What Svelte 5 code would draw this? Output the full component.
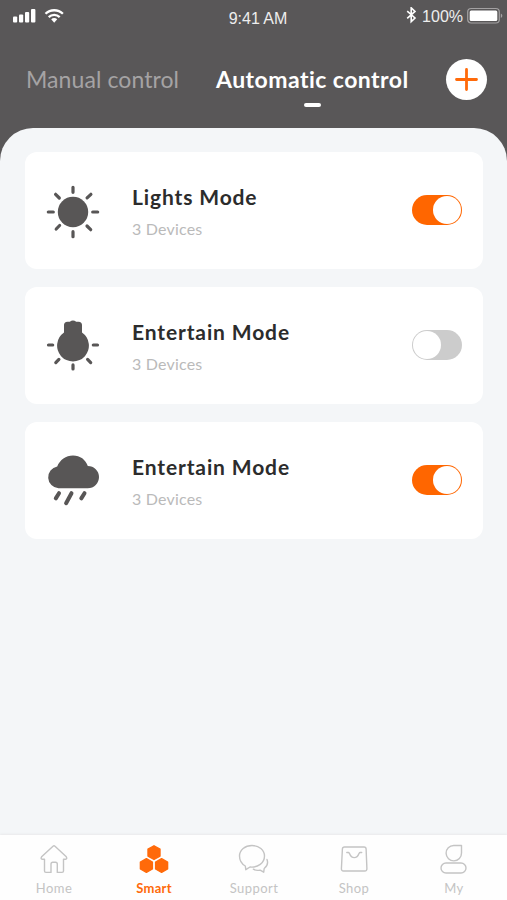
<script>
	let tab = 'auto';
	let active = 'Smart';

	let modes = [
		{ icon: 'sun', name: 'Lights Mode', devices: 3, on: true },
		{ icon: 'bulb', name: 'Entertain Mode', devices: 3, on: false },
		{ icon: 'rain', name: 'Entertain Mode', devices: 3, on: true }
	];

	const navItems = ['Home', 'Smart', 'Support', 'Shop', 'My'];

	const toggle = (index) => {
		modes[index].on = !modes[index].on;
	};
</script>

<div class="screen">
	<header>
		<div class="status">
			<div class="signal">
				<svg width="54" height="18" viewBox="0 0 54 18">
					<g fill="#fff">
						<rect x="1" y="9.5" width="4.2" height="6" rx="1" />
						<rect x="7" y="7.5" width="4.2" height="8" rx="1" />
						<rect x="13" y="5" width="4.2" height="10.5" rx="1" />
						<rect x="19" y="2" width="4.4" height="13.5" rx="1" />
						<path d="M39.2 12.2a4.2 4.2 0 0 1 6 0l-3 3.5z" />
					</g>
					<g fill="none" stroke="#fff" stroke-width="2.3">
						<path d="M33.5 6.8a12.4 12.4 0 0 1 17.4 0" />
						<path d="M36.7 10.1a8 8 0 0 1 11 0" />
					</g>
				</svg>
			</div>
			<span class="time">9:41 AM</span>
			<div class="power">
				<svg width="11" height="18" viewBox="0 0 11 18">
					<path d="M1.2 4.2 9 11 5.2 14.6V.8L9 4.4 1.2 11.4" fill="none" stroke="#fff" stroke-width="1.6" />
				</svg>
				<span class="percent">100%</span>
				<svg width="37" height="18" viewBox="0 0 37 18">
					<rect x=".7" y="1.5" width="31.6" height="14.5" rx="3.5" fill="none" stroke="#a3a1a2" stroke-width="1.2" />
					<rect x="2.7" y="3.5" width="27.6" height="10.6" rx="1.5" fill="#fff" />
					<path d="M33.8 6.5c2 .8 2 3.7 0 4.5z" fill="#a3a1a2" />
				</svg>
			</div>
		</div>
		<div class="tabs">
			<button class="tab manual" class:selected={tab === 'manual'} on:click={() => (tab = 'manual')}>Manual control</button>
			<button class="tab auto" class:selected={tab === 'auto'} on:click={() => (tab = 'auto')}>Automatic control</button>
			<button class="add" aria-label="Add">
				<svg width="41" height="41" viewBox="0 0 41 41">
					<path d="M20.5 10.5v20M10.5 20.5h20" stroke="#ff6a0a" stroke-width="2.8" stroke-linecap="round" />
				</svg>
			</button>
		</div>
	</header>

	<main>
		{#each modes as mode, i}
			<div class="card">
				<svg class="mode-icon" width="54" height="54" viewBox="0 0 54 54" fill="#585656" stroke="#585656" stroke-linecap="round">
					{#if mode.icon === 'sun'}
						<circle cx="27" cy="27" r="15.2" stroke="none" />
						<path
							d="M27 2.3v5M27 46.7v5M2.3 27h5M46.7 27h5M9.6 9.3l3.7 3.7M41 41l3.7 3.7M44.9 9.3l-3.8 3.6M13.6 40.5l-3.4 3.5"
							stroke-width="3.2"
						/>
					{:else if mode.icon === 'bulb'}
						<path
							d="M18 12.5V5Q18 2 21.5 1.7L23.8 1.7Q27-.9 30.2 1.7L32.5 1.7Q36 2 36 5V12.5A15.9 15.9 0 1 1 18 12.5z"
							stroke="none"
						/>
						<path d="M27 44.9v4M2.5 25h4.2M47.3 25h4.2M12.9 39.4l-3.1 3.2M41.6 39.4l3.1 3.2" stroke-width="3.2" />
					{:else}
						<path
							d="M12.5 33.3A11 11 0 0 1 11.2 11.5C14 4.8 19.8 .5 27 .5s12.6 4.200 14.800 10.400A11.200 11.200 0 0 1 41.800 33.300z"
							stroke="none"
						/>
						<path d="M13 38.2l-3.2 5.2M25.5 38.2l-5.4 10M38.5 38.2l-3.2 5.2" stroke-width="4" />
					{/if}
				</svg>
				<div class="info">
					<h2>{mode.name}</h2>
					<p>{mode.devices} Devices</p>
				</div>
				<button class="switch" class:on={mode.on} aria-label="Toggle {mode.name}" on:click={() => toggle(i)}>
					<span class="knob"></span>
				</button>
			</div>
		{/each}
	</main>

	<nav>
		{#each navItems as item}
			<button class="nav-item" class:active={active === item} on:click={() => (active = item)}>
				<svg width="32" height="32" viewBox="0 0 32 32" fill="none" stroke="currentColor" stroke-width="1.4" stroke-linejoin="round" stroke-linecap="round">
					{#if item === 'Home'}
						<path d="M15 3.2Q16 2.3 17 3.2L28.3 13.8Q29.5 15.9 27.5 16.3H25.5V28Q25.5 29.4 24 29.4H19.3V21Q19.3 19.2 17.5 19.2H14.8Q13 19.2 13 21V29.4H8Q6.5 29.4 6.5 28V16.3H4.3Q2.3 15.9 3.6 13.8z" />
					{:else if item === 'Smart'}
						<g fill="currentColor">
							<path d="M16 2.8l6 3.4v6.900l-6 3.400-6-3.400V6.200z" />
							<path d="M8.400 15.700l6 3.400v6.900l-6 3.400-6-3.400v-6.900z" />
							<path d="M23.600 15.700l6 3.400v6.900l-6 3.400-6-3.400v-6.900z" />
						</g>
					{:else if item === 'Support'}
						<path d="M14 2.5C7 2.5 1.5 7 1.5 13c0 4.5 2.3 8 5.8 10l.5 3.7 4.2-2.7c8 .8 14.5-4 14.5-11C26.500 7 21 2.500 14 2.500z" />
						<path d="M29 16.500c1.300 3.500 0 6.800-2.800 9l-.5 3.700-3.600-2.100c-2.500.600-5 .200-6.700-.900" />
					{:else if item === 'Shop'}
						<path d="M6.500 4H26Q28 4 28.100 6L28.900 25.500Q29 28 26.800 28H5.500Q3.300 28 3.400 25.500L4.400 6Q4.500 4 6.500 4z" />
						<path d="M8.800 9.500h1.500Q11 9.500 11.500 10.500C13.500 16 19 16 21 10.500Q21.500 9.500 22.200 9.500H23.700" />
					{:else}
						<path d="M15.700 2.500H23.500V10A7.700 7.700 0 1 1 15.700 2.500z" />
						<rect x="3" y="20" width="25" height="10" rx="5" />
					{/if}
				</svg>
				<span>{item}</span>
			</button>
		{/each}
	</nav>
</div>

<style>
	:global(body) {
		margin: 0;
	}

	.screen {
		width: 507px;
		height: 900px;
		display: flex;
		flex-direction: column;
		background: #595758;
		font-family: Lato, sans-serif;
		overflow: hidden;
	}

	button {
		border: none;
		padding: 0;
		background: none;
		font-family: inherit;
		cursor: pointer;
	}

	svg {
		display: block;
		flex: none;
	}

	header {
		height: 127.5px;
		flex: none;
	}

	.status {
		display: grid;
		grid-template-columns: 1fr auto 1fr;
		height: 36px;
		padding: 0 3px 0 12px;
		color: #eee;
		font-family: 'Liberation Sans', sans-serif;
		font-size: 16px;
	}

	.signal {
		padding-top: 7px;
	}

	.time {
		padding-top: 9px;
		line-height: 20px;
	}

	.power {
		display: flex;
		justify-content: flex-end;
		padding-top: 7px;
	}

	.percent {
		line-height: 19px;
		margin: 0 4px 0 5px;
	}

	.tabs {
		display: flex;
		align-items: center;
		height: 86px;
		padding: 0 20px 0 26px;
	}

	.tab {
		position: relative;
		font-size: 23px;
		line-height: 30px;
		white-space: nowrap;
		text-align: left;
		color: #a5a3a4;
	}

	.manual {
		width: 190px;
		letter-spacing: 0.08px;
	}

	.auto {
		width: 193px;
		letter-spacing: 0.46px;
	}

	.tab.selected {
		color: #fff;
		font-weight: bold;
	}

	.tab.selected::after {
		content: '';
		position: absolute;
		left: calc(50% - 9px);
		bottom: -13px;
		width: 17px;
		height: 4.5px;
		border-radius: 2px;
		background: #fff;
	}

	.add {
		width: 41px;
		height: 41px;
		margin-left: auto;
		border-radius: 50%;
		background: #fff;
	}

	main {
		flex: 1;
		display: flex;
		flex-direction: column;
		gap: 18px;
		padding: 24.5px 24px 0 25px;
		border-radius: 33px 33px 0 0;
		background: #f4f6f8;
	}

	.card {
		display: flex;
		align-items: center;
		height: 117px;
		padding: 0 21px;
		box-sizing: border-box;
		border-radius: 12px;
		background: #fff;
	}

	.mode-icon {
		margin-top: 2px;
	}

	.info {
		flex: 1;
		margin: 2px 0 0 32px;
	}

	h2 {
		margin: 0;
		font-size: 21px;
		line-height: 28px;
		letter-spacing: 0.87px;
		color: #2c2c2c;
	}

	p {
		margin: 6px 0 0;
		font-size: 16px;
		line-height: 24px;
		letter-spacing: 0.2px;
		color: #bababa;
	}

	.switch {
		display: flex;
		width: 50px;
		height: 30px;
		margin-bottom: 1px;
		padding: 1px;
		border-radius: 15px;
		background: #ccc;
	}

	.switch.on {
		justify-content: flex-end;
		background: #ff6600;
	}

	.knob {
		width: 28px;
		height: 28px;
		border-radius: 50%;
		background: #fff;
	}

	nav {
		display: grid;
		grid-template-columns: repeat(5, 100px);
		height: 65px;
		flex: none;
		padding-left: 4px;
		background: #fefefe;
		box-shadow: 0 -1px 2px #e9eaeb;
	}

	.nav-item {
		display: flex;
		flex-direction: column;
		align-items: center;
		padding-top: 8px;
		color: #c4c4c4;
	}

	.nav-item span {
		font-size: 13px;
		line-height: 18px;
		margin-top: 4px;
		letter-spacing: 0.45px;
	}

	.nav-item.active {
		color: #ff6a0a;
	}

	.nav-item.active span {
		font-weight: bold;
		letter-spacing: 0.3px;
	}
</style>
